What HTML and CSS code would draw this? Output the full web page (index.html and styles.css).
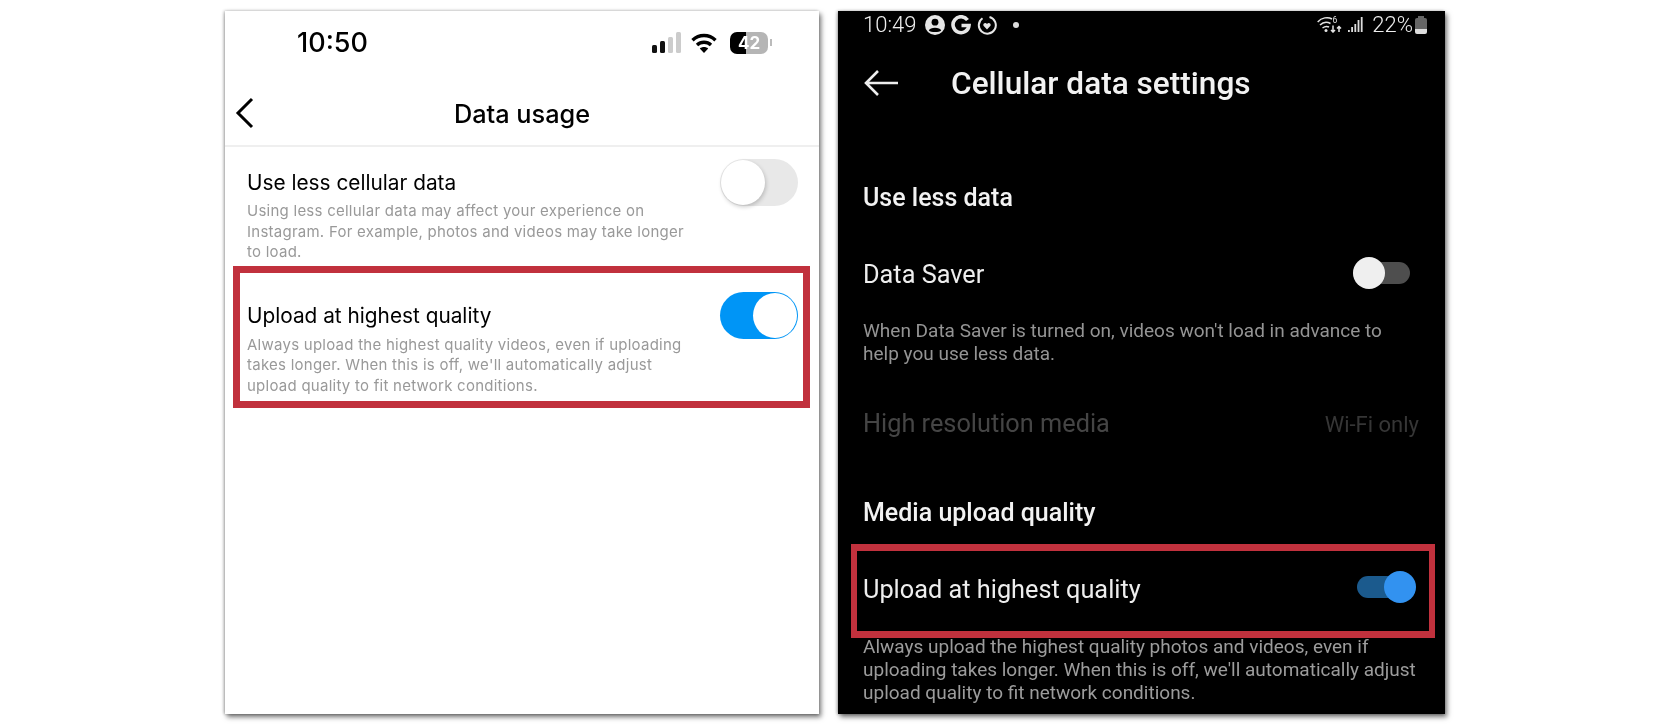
FILE: index.html
```html
<!DOCTYPE html>
<html lang="en">
<head>
    <meta charset="UTF-8">
    <meta name="viewport" content="width=device-width, initial-scale=1.0">
    <link rel="stylesheet" href="styles.css">
    <title>Upload at highest quality</title>
</head>
<body>
    <div class="phone ios">
        <div class="ios-status">
            <span class="ios-time">10:50</span>
            <div class="ios-icons">
                <svg class="ios-signal" width="29" height="21" viewBox="0 0 29 21">
                    <rect x="0" y="13" width="5" height="8" rx="1.5" fill="#111"/>
                    <rect x="8" y="9" width="5" height="12" rx="1.5" fill="#111"/>
                    <rect x="16" y="5" width="5" height="16" rx="1.5" fill="#ccc"/>
                    <rect x="24" y="0" width="5" height="21" rx="1.5" fill="#ccc"/>
                </svg>
                <svg width="26" height="20" viewBox="0 0 26 20" fill="none" stroke="#000" stroke-width="3.4">
                    <path d="M1.5 7.2C8 1 18 1 24.5 7.2"/>
                    <path d="M6 12C10 8.3 16 8.3 20 12"/>
                    <path d="M13 20L8.8 15.6C11 13.6 15 13.6 17.2 15.6Z" fill="#000" stroke="none"/>
                </svg>
                <div class="ios-battery"><span>42</span></div>
                <div class="ios-nub"></div>
            </div>
        </div>
        <div class="ios-nav">
            <svg class="ios-back" width="20" height="32" viewBox="0 0 20 32" fill="none" stroke="#000" stroke-width="3">
                <path d="M17 2L3 16L17 30"/>
            </svg>
            <h1>Data usage</h1>
        </div>
        <div class="ios-row first">
            <div class="ios-text">
                <h2>Use less cellular data</h2>
                <p>Using less cellular data may affect your experience on Instagram. For example, photos and videos may take longer to load.</p>
            </div>
            <div class="ios-toggle"></div>
        </div>
        <div class="ios-row second">
            <div class="mark"></div>
            <div class="ios-text">
                <h2>Upload at highest quality</h2>
                <p>Always upload the highest quality videos, even if uploading takes longer. When this is off, we'll automatically adjust upload quality to fit network conditions.</p>
            </div>
            <div class="ios-toggle on"></div>
        </div>
    </div>

    <div class="phone android">
        <div class="and-status">
            <span class="and-time">10:49</span>
            <svg width="20" height="20" viewBox="0 0 20 20">
                <circle cx="10" cy="10" r="10" fill="#e6e6e6"/>
                <circle cx="10" cy="7.2" r="3.4" fill="#000"/>
                <path d="M3.8 15.5C5 11.8 15 11.8 16.2 15.5C14 17.6 6 17.6 3.8 15.5Z" fill="#000"/>
            </svg>
            <svg width="20" height="20" viewBox="0 0 20 20" fill="none" stroke="#e6e6e6" stroke-width="3.6">
                <path d="M16.5 5A8 8 0 1 0 18 10.5H10.5"/>
            </svg>
            <svg width="20" height="20" viewBox="0 0 20 20" fill="none" stroke="#e6e6e6" stroke-width="2">
                <path d="M12.5 2A8.5 8.5 0 1 1 5.5 3.2"/>
                <path d="M10 14.5L6.5 10.8C5.5 8.5 8.6 7 10 9C11.4 7 14.5 8.5 13.5 10.8Z" fill="#e6e6e6" stroke="none"/>
            </svg>
            <div class="and-dot"></div>
            <div class="and-right">
                <svg width="25" height="17" viewBox="0 0 25 17" fill="none" stroke="#e4e4e4" stroke-width="1.5">
                    <path d="M0.7 6C4.5 1.5 11 0.5 15 3"/>
                    <path d="M3 9C6 6 10 5.5 13.5 7.5"/>
                    <path d="M5.5 12C7.5 10.5 10 10 12 11"/>
                    <circle cx="9" cy="14.5" r="1.5" fill="#e4e4e4" stroke="none"/>
                    <path d="M16 9.5V16M14 14L16 16L18 14"/>
                    <path d="M22 16V10.5M20 12.5L22 10.5L24 12.5"/>
                    <text x="15.5" y="7" font-size="8.5" font-family="Roboto, sans-serif" fill="#e4e4e4" stroke="none">6</text>
                </svg>
                <svg width="15" height="15" viewBox="0 0 15 15" fill="#ddd">
                    <rect x="0" y="13" width="1.8" height="2"/>
                    <rect x="3.2" y="10" width="1.8" height="5"/>
                    <rect x="6.4" y="7" width="1.8" height="8"/>
                    <rect x="9.6" y="3" width="1.8" height="12"/>
                    <rect x="12.8" y="0" width="1.8" height="15"/>
                </svg>
                <span class="and-batt-text">22%</span>
                <div class="and-battery"></div>
            </div>
        </div>
        <div class="and-nav">
            <svg width="36" height="28" viewBox="0 0 36 28" fill="none" stroke="#eee" stroke-width="2.6">
                <path d="M35 14H3M15 2L3 14L15 26"/>
            </svg>
            <h1>Cellular data settings</h1>
        </div>
        <div class="and-body">
            <h3 class="use-less">Use less data</h3>
            <div class="and-row saver">
                <span>Data Saver</span>
                <div class="and-toggle"></div>
            </div>
            <p class="and-desc">When Data Saver is turned on, videos won't load in advance to help you use less data.</p>
            <div class="and-row disabled">
                <span>High resolution media</span>
                <span class="and-value">Wi-Fi only</span>
            </div>
            <h3 class="media">Media upload quality</h3>
            <div class="and-row upload">
                <div class="mark"></div>
                <span>Upload at highest quality</span>
                <div class="and-toggle on"></div>
            </div>
            <p class="and-desc">Always upload the highest quality photos and videos, even if uploading takes longer. When this is off, we'll automatically adjust upload quality to fit network conditions.</p>
        </div>
    </div>
</body>
</html>
```

FILE: styles.css
```css
html, body {
    margin: 0;
    padding: 0;
    height: 100%;
    background: #fff;
    overflow: hidden;
}

body {
    display: flex;
    justify-content: center;
    align-items: flex-start;
    gap: 19px;
    padding-top: 11px;
    box-sizing: border-box;
}

h1, h2, h3, p {
    margin: 0;
}

.phone {
    height: 703px;
    overflow: hidden;
    box-shadow: 2px 3px 5px rgba(0, 0, 0, 0.55), -1px 0 3px rgba(0, 0, 0, 0.3);
    filter: blur(0.35px);
}

.mark {
    position: absolute;
    box-sizing: border-box;
    border: 7px solid #c1313d;
}

/* left phone */
.ios {
    width: 594px;
    background: #fff;
    font-family: "Inter", "Liberation Sans", sans-serif;
    color: #000;
    overflow: visible;
}

.ios-status {
    height: 61px;
    box-sizing: border-box;
    padding: 2px 47px 0 72px;
    display: flex;
    align-items: center;
    justify-content: space-between;
}

.ios-time {
    font-size: 27px;
    font-weight: 500;
}

.ios-icons {
    display: flex;
    align-items: center;
    gap: 10px;
}

.ios-battery {
    width: 38px;
    height: 22px;
    border-radius: 7px;
    background: linear-gradient(90deg, #000 42%, #b5b5b5 42%);
    color: #fff;
    font-size: 17px;
    font-weight: 700;
    text-align: center;
    line-height: 22px;
    margin-left: 3px;
}

.ios-nub {
    width: 2px;
    height: 7px;
    background: #bbb;
    margin-left: -8px;
}

.ios-nav {
    height: 75px;
    box-sizing: border-box;
    border-bottom: 2px solid #efefef;
    padding-top: 9px;
    display: flex;
    align-items: center;
    justify-content: center;
    position: relative;
}

.ios-nav h1 {
    font-size: 25.3px;
    font-weight: 500;
}

.ios-back {
    position: absolute;
    left: 10px;
    top: 25px;
}

.ios-row {
    position: relative;
    display: flex;
    justify-content: space-between;
    align-items: flex-start;
    padding: 0 21px 0 22px;
}

.ios-row.first {
    padding-top: 21px;
}

.ios-row.second {
    padding-top: 38px;
}

.ios-row.second .mark {
    left: 8px;
    right: 9px;
    top: 3px;
    bottom: -12px;
}

.ios-text {
    width: 445px;
}

.ios-text h2 {
    font-size: 20.8px;
    font-weight: 400;
    line-height: 30px;
}

.ios-text p {
    font-size: 15px;
    line-height: 20.5px;
    letter-spacing: 0.25px;
    color: #999;
    margin-top: 3px;
}

.ios-row.second p {
    margin-top: 4px;
}

.ios-toggle {
    position: relative;
    width: 78px;
    height: 47px;
    margin-top: -9px;
    border-radius: 24px;
    background: #e8e8e8;
}

.ios-toggle::after {
    content: "";
    position: absolute;
    left: 1px;
    top: 1px;
    width: 44px;
    height: 45px;
    border-radius: 50%;
    background: #fff;
    box-shadow: 1px 2px 4px rgba(0, 0, 0, 0.2);
}

.ios-toggle.on {
    background: #0095f6;
}

.ios-toggle.on::after {
    left: 33px;
    box-shadow: none;
}

/* right phone */
.android {
    width: 607px;
    background: #000;
    font-family: "Roboto", "Liberation Sans", sans-serif;
    color: #eee;
}

.and-status {
    height: 27px;
    display: flex;
    align-items: center;
    padding: 0 18px 0 25px;
    gap: 6px;
}

.and-time {
    font-size: 22px;
    font-weight: 300;
    margin-right: 3px;
}

.and-dot {
    width: 6px;
    height: 6px;
    border-radius: 50%;
    background: #ddd;
    margin-left: 10px;
}

.and-right {
    margin-left: auto;
    display: flex;
    align-items: center;
    gap: 6px;
}

.and-batt-text {
    font-size: 22px;
    font-weight: 300;
    margin-left: 3px;
}

.and-battery {
    position: relative;
    width: 12px;
    height: 16px;
    margin-top: 2px;
    border-radius: 2px;
    margin-left: -4px;
    background: linear-gradient(180deg, #666 70%, #ddd 70%);
}

.and-battery::before {
    content: "";
    position: absolute;
    left: 3px;
    top: -2px;
    width: 6px;
    height: 2px;
    background: #666;
}

.and-nav {
    height: 90px;
    display: flex;
    align-items: center;
    padding-left: 25px;
    gap: 52px;
}

.and-nav h1 {
    font-size: 31.6px;
    font-weight: 500;
    color: #f2f2f2;
}

.and-body {
    padding: 0 25px;
}

.and-body h3 {
    font-size: 25px;
    font-weight: 500;
    line-height: 30px;
    color: #f2f2f2;
}

.use-less {
    margin-top: 55px;
}

.media {
    margin-top: 58px;
}

.and-row {
    position: relative;
    display: flex;
    align-items: center;
    justify-content: space-between;
    font-size: 25.3px;
    line-height: 30px;
}

.and-row.saver {
    margin-top: 47px;
}

.and-row.disabled {
    margin-top: 42px;
    color: #454545;
}

.and-row.upload {
    margin-top: 47px;
}

.and-row.upload .mark {
    left: -12px;
    right: -15px;
    top: -31px;
    bottom: -33px;
    border-width: 7px 6px;
}

.and-value {
    font-size: 22px;
    color: #363636;
    margin-top: 3px;
    margin-right: 1px;
}

.and-desc {
    margin-top: 29px;
    font-size: 19px;
    line-height: 23px;
    color: #949494;
}

.upload + .and-desc {
    margin-top: 30px;
    color: #9c9c9c;
}

.and-toggle {
    position: relative;
    width: 57px;
    height: 22px;
    border-radius: 11px;
    background: #4e4e4e;
    margin: 0 10px 4px 0;
}

.and-toggle::after {
    content: "";
    position: absolute;
    left: 0;
    top: -5px;
    width: 32px;
    height: 32px;
    border-radius: 50%;
    background: #efefef;
}

.and-toggle.on {
    background: #1b5a8d;
    margin: 0 6px 6px 0;
}

.and-toggle.on::after {
    left: 27px;
    background: #3292f0;
}
```
